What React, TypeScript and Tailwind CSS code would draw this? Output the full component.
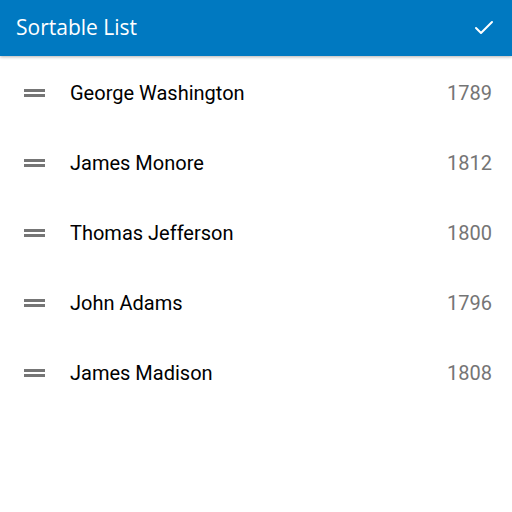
import { Check } from "lucide-react";

const presidents = [
  { name: "George Washington", year: 1789 },
  { name: "James Monore", year: 1812 },
  { name: "Thomas Jefferson", year: 1800 },
  { name: "John Adams", year: 1796 },
  { name: "James Madison", year: 1808 },
];

const DragHandle = () => (
  <div className="flex flex-col gap-[2px] w-[21px]">
    <div className="h-[3px] bg-[#757575]" />
    <div className="h-[3px] bg-[#757575]" />
  </div>
);

export default function App() {
  return (
    <div className="w-[512px] h-[512px] bg-white flex flex-col" style={{ fontFamily: "Roboto, sans-serif" }}>
      <header className="h-14 bg-[#0079c1] flex items-center justify-between px-4 shadow-[0_1px_3px_rgba(0,0,0,0.3)] z-10">
        <h1 className="text-white text-[21px]" style={{ fontFamily: "'Open Sans', sans-serif" }}>
          Sortable List
        </h1>
        <Check className="text-white w-6 h-6" strokeWidth={2} />
      </header>
      <ul className="pt-[2px]">
        {presidents.map((p) => (
          <li key={p.name} className="h-[70px] flex items-center pl-6 pr-5">
            <DragHandle />
            <span className="ml-[25px] flex-1 text-[20px] text-black">{p.name}</span>
            <span className="text-[20px] text-[#757575]">{p.year}</span>
          </li>
        ))}
      </ul>
    </div>
  );
}
